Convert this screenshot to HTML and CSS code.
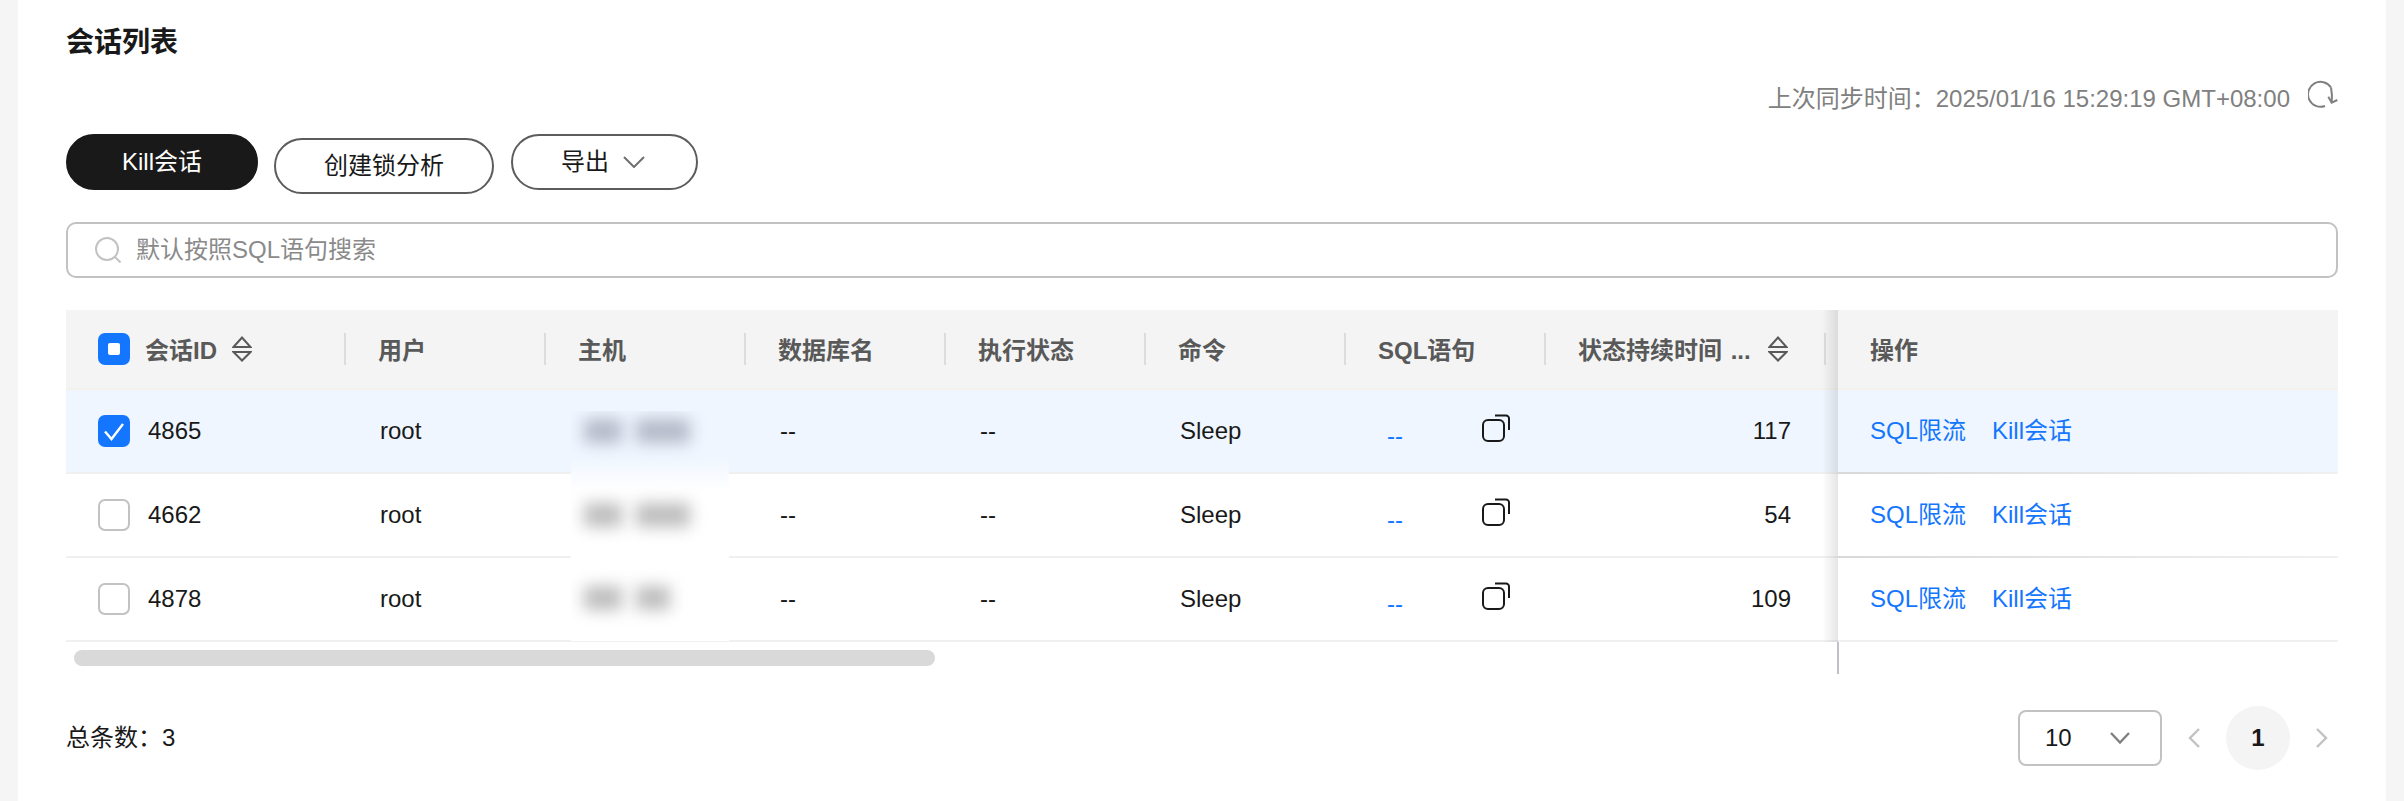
FILE: index.html
```html
<!DOCTYPE html>
<html lang="zh-CN">
<head>
<meta charset="utf-8">
<title>会话列表</title>
<link rel="stylesheet" href="styles.css">
</head>
<body>
<main class="card">
  <h1 class="title">会话列表</h1>
  <div class="sync">
    <span class="sync-text">上次同步时间：2025/01/16 15:29:19 GMT+08:00</span>
    <svg class="refresh" viewBox="0 0 30 28" width="30" height="28" fill="none" stroke="#808080" stroke-width="2"><path d="M23 7.5A12.5 12.5 0 1 0 17 26"/><path d="M23 7.5Q24.5 15 23.7 22.7"/><path d="M20.3 16.7L23.7 22.7L29.3 20"/></svg>
  </div>
  <div class="toolbar">
    <button class="btn btn-primary">Kill会话</button>
    <button class="btn btn-create">创建锁分析</button>
    <button class="btn btn-export">导出
      <svg viewBox="0 0 22 12" width="22" height="12" fill="none" stroke="#707070" stroke-width="2"><path d="M1 1L11 11L21 1"/></svg>
    </button>
  </div>
  <div class="search">
    <svg viewBox="0 0 26 26" width="26" height="26" fill="none" stroke="#c2c2c2" stroke-width="2"><circle cx="12" cy="12" r="11"/><path d="M20 20L25.5 25.5"/></svg>
    <span>默认按照SQL语句搜索</span>
  </div>
  <div class="table-wrap">
    <table class="table">
      <colgroup>
        <col class="c-id"><col class="c-n"><col class="c-n"><col class="c-n"><col class="c-n"><col class="c-n"><col class="c-n"><col class="c-dur"><col class="c-op">
      </colgroup>
      <thead>
        <tr>
          <th class="sep"><div class="head-id"><span class="check check-part"><i></i></span><span>会话ID</span><svg class="sort" viewBox="0 0 20 26" width="20" height="26" fill="none" stroke="#595959" stroke-width="2"><path d="M1.5 11L10 1.5L18.5 11Z"/><path d="M1.5 16L10 24.5L18.5 16Z"/></svg></div></th>
          <th class="sep">用户</th>
          <th class="sep">主机</th>
          <th class="sep">数据库名</th>
          <th class="sep">执行状态</th>
          <th class="sep">命令</th>
          <th class="sep">SQL语句</th>
          <th class="sep sep-last"><div class="head-dur"><span class="head-dur-text">状态持续时间 ...</span><svg class="sort" viewBox="0 0 20 26" width="20" height="26" fill="none" stroke="#595959" stroke-width="2"><path d="M1.5 11L10 1.5L18.5 11Z"/><path d="M1.5 16L10 24.5L18.5 16Z"/></svg></div></th>
          <th class="op">操作</th>
        </tr>
      </thead>
      <tbody>
        <tr class="selected">
          <td class="first"><div class="cell-id"><span class="check check-on"><svg viewBox="0 0 32 32" width="32" height="32" fill="none" stroke="#fff" stroke-width="2.4"><path d="M7 16.5L13.5 24L25 9"/></svg></span>4865</div></td>
          <td>root</td><td></td><td>--</td><td>--</td><td>Sleep</td>
          <td class="first"><div class="sql"><span class="dash">--</span><svg class="copy" viewBox="0 0 30 30" width="30" height="30" fill="none" stroke="#191919" stroke-width="2"><rect x="2" y="6" width="21" height="21" rx="5"/><path d="M14 1.5H25a3 3 0 0 1 3 3V16"/></svg></div></td>
          <td class="num">117</td>
          <td class="op op-strong"><a class="link">SQL限流</a><a class="link">Kill会话</a></td>
        </tr>
        <tr>
          <td class="first"><div class="cell-id"><span class="check"></span>4662</div></td>
          <td>root</td><td></td><td>--</td><td>--</td><td>Sleep</td>
          <td class="first"><div class="sql"><span class="dash">--</span><svg class="copy" viewBox="0 0 30 30" width="30" height="30" fill="none" stroke="#191919" stroke-width="2"><rect x="2" y="6" width="21" height="21" rx="5"/><path d="M14 1.5H25a3 3 0 0 1 3 3V16"/></svg></div></td>
          <td class="num">54</td>
          <td class="op op-strong"><a class="link">SQL限流</a><a class="link">Kill会话</a></td>
        </tr>
        <tr>
          <td class="first"><div class="cell-id"><span class="check"></span>4878</div></td>
          <td>root</td><td></td><td>--</td><td>--</td><td>Sleep</td>
          <td class="first"><div class="sql"><span class="dash">--</span><svg class="copy" viewBox="0 0 30 30" width="30" height="30" fill="none" stroke="#191919" stroke-width="2"><rect x="2" y="6" width="21" height="21" rx="5"/><path d="M14 1.5H25a3 3 0 0 1 3 3V16"/></svg></div></td>
          <td class="num">109</td>
          <td class="op"><a class="link">SQL限流</a><a class="link">Kill会话</a></td>
        </tr>
      </tbody>
    </table>
    <div class="mask">
      <div class="mask-row mask-blue"><i class="blob-a"></i><i class="blob-b"></i></div>
      <div class="mask-row"><i class="blob-a"></i><i class="blob-b"></i></div>
      <div class="mask-row"><i class="blob-a"></i><i class="blob-c"></i></div>
    </div>
  </div>
  <div class="scroll-track"><div class="scroll-thumb"></div></div>
  <div class="footer">
    <span class="total">总条数：3</span>
    <div class="pager">
      <div class="select"><span>10</span><svg viewBox="0 0 20 12" width="20" height="12" fill="none" stroke="#808080" stroke-width="2.4"><path d="M1 1L10 10.5L19 1"/></svg></div>
      <svg viewBox="0 0 12 20" width="12" height="20" fill="none" stroke="#c2c2c2" stroke-width="2.4"><path d="M11 1L2 10L11 19"/></svg>
      <span class="page">1</span>
      <svg viewBox="0 0 12 20" width="12" height="20" fill="none" stroke="#c2c2c2" stroke-width="2.4"><path d="M1 1L10 10L1 19"/></svg>
    </div>
  </div>
</main>
</body>
</html>
```
FILE: styles.css
```css
* { box-sizing: border-box; }
html, body { margin: 0; padding: 0; height: 100%; overflow: hidden; }
body {
  background: #f5f5f5;
  font-family: "Liberation Sans", "Noto Sans CJK SC", sans-serif;
  font-size: 24px;
  line-height: 32px;
  color: #191919;
}
.card {
  margin: 0 18px;
  height: 801px;
  padding: 23px 48px 0;
  background: #fff;
}
.title {
  margin: 0;
  font-size: 28px;
  line-height: 40px;
  font-weight: 700;
}
.sync {
  margin-top: 17px;
  height: 34px;
  display: flex;
  justify-content: flex-end;
  align-items: center;
  gap: 18px;
  color: #808080;
  white-space: nowrap;
}
.sync-text { padding-top: 3px; }
.refresh { margin-bottom: 6px; }
.toolbar {
  margin-top: 20px;
  height: 60px;
  display: flex;
  align-items: flex-start;
}
.btn {
  height: 56px;
  border-radius: 28px;
  border: 2px solid #5c5c5c;
  background: #fff;
  color: #191919;
  font: inherit;
  padding: 0;
  display: flex;
  align-items: center;
  justify-content: center;
}
.btn-primary { width: 192px; background: #191919; border-color: #191919; color: #fff; }
.btn-create { width: 220px; margin: 4px 0 0 16px; }
.btn-export { width: 187px; margin-left: 17px; gap: 14px; padding-right: 3px; }
.search {
  margin-top: 28px;
  height: 56px;
  border: 2px solid #c2c2c2;
  border-radius: 10px;
  padding-left: 27px;
  display: flex;
  align-items: center;
  gap: 15px;
  color: #8a8a8a;
}
.table-wrap {
  position: relative;
  margin-top: 32px;
}
.table {
  width: 2272px;
  table-layout: fixed;
  border-collapse: separate;
  border-spacing: 0;
}
.c-id { width: 280px; }
.c-n { width: 200px; }
.c-dur { width: 292px; }
.c-op { width: 500px; }
th {
  position: relative;
  height: 80px;
  padding: 3px 0 0 32px;
  background: #f4f4f4;
  border-bottom: 2px solid #f3f0ee;
  color: #595959;
  font-weight: 700;
  text-align: left;
  white-space: nowrap;
}
.sep::after {
  content: "";
  position: absolute;
  right: 0;
  top: 23px;
  width: 2px;
  height: 32px;
  background: #dcdcdc;
}
.sep-last::after { right: 12px; }
.head-id { display: flex; align-items: center; }
.head-id .check { margin: 0 15px 3px 0; }
.head-id .sort { margin: 0 0 3px 15px; }
.head-dur { display: flex; align-items: center; gap: 17px; }
.head-dur .sort { margin-bottom: 3px; }
.head-dur-text { word-spacing: 2px; }
td {
  position: relative;
  height: 84px;
  padding: 0 0 0 34px;
  border-bottom: 2px solid #f0f0f0;
  background: #fff;
  white-space: nowrap;
}
td.first { padding-left: 32px; }
.selected td { background: #eff6ff; }
.cell-id { display: flex; align-items: center; gap: 18px; }
.check {
  flex: none;
  width: 32px;
  height: 32px;
  border: 2px solid #c2c2c2;
  border-radius: 7px;
  background: #fff;
  display: flex;
  align-items: center;
  justify-content: center;
}
.check-part { background: #1476ff; border-color: #1476ff; }
.check-part i { width: 12px; height: 12px; background: #fff; border-radius: 2px; }
.check-on { background: #1476ff; border: 0; }
.sql { display: flex; align-items: center; }
.dash {
  width: 94px;
  margin: 10px 0 0 9px;
  color: #1476ff;
}
.copy { margin-bottom: 4px; }
td.num { padding: 0 47px 0 0; text-align: right; }
td.op { padding-left: 32px; }
.op { z-index: 1; }
th.op::before, td.op::before {
  content: "";
  position: absolute;
  left: -16px;
  top: 0;
  bottom: -2px;
  width: 16px;
  background: linear-gradient(90deg, rgba(0, 0, 0, 0), rgba(0, 0, 0, .1));
}
.op-strong { border-image: linear-gradient(90deg, #d9d9d9, #f0f0f0) 1; }
.link { color: #1476ff; margin-right: 26px; }
.mask {
  position: absolute;
  left: 505px;
  top: 101px;
  width: 158px;
  height: 230px;
  overflow: hidden;
  background: linear-gradient(180deg, #eff6ff 0, #eff6ff 46px, #ffffff 80px);
}
.mask-row {
  height: 84px;
  padding: 8px 0 0 13px;
  display: flex;
  gap: 14px;
}
.mask-row + .mask-row { height: 83px; }
.mask-row i { display: block; height: 24px; background: #bdbdbd; filter: blur(8px); }
.mask-blue i { background: #b3bac8; }
.blob-a { width: 38px; }
.blob-b { width: 54px; }
.blob-c { width: 34px; }
.scroll-track {
  position: relative;
  height: 32px;
  padding: 8px 0 0 8px;
}
.scroll-track::after {
  content: "";
  position: absolute;
  left: 1771px;
  top: 0;
  width: 2px;
  height: 32px;
  background: #c0c0c8;
}
.scroll-thumb {
  width: 861px;
  height: 16px;
  border-radius: 8px;
  background: #d9d9d9;
}
.footer {
  margin-top: 32px;
  height: 64px;
  display: flex;
  justify-content: space-between;
  align-items: center;
}
.pager {
  display: flex;
  align-items: center;
  gap: 26px;
  padding-right: 10px;
}
.select {
  width: 144px;
  height: 56px;
  border: 2px solid #c2c2c2;
  border-radius: 8px;
  padding: 0 30px 0 25px;
  display: flex;
  align-items: center;
  justify-content: space-between;
}
.page {
  width: 64px;
  height: 64px;
  border-radius: 50%;
  background: #f4f4f4;
  display: flex;
  align-items: center;
  justify-content: center;
  font-weight: 700;
}
```
